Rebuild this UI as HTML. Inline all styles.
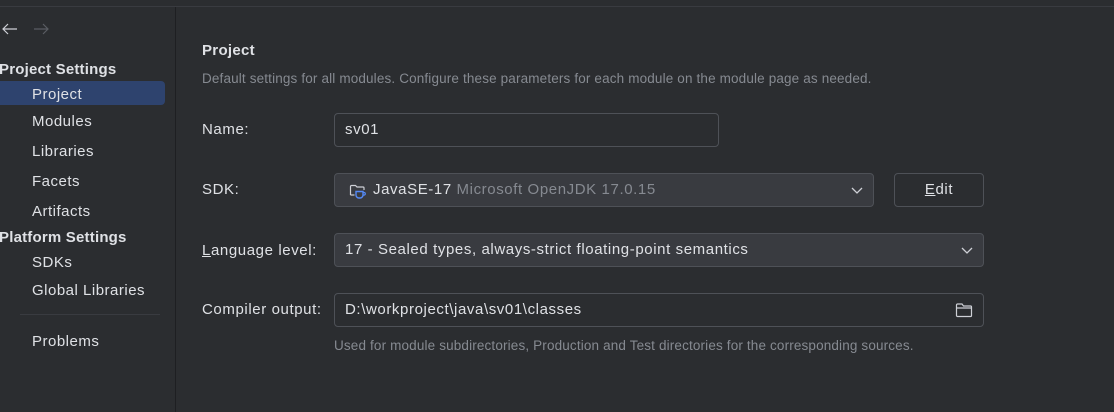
<!DOCTYPE html><html><head><meta charset="utf-8"><style>
body{margin:0;width:1114px;height:412px;background:#2b2d30;font-family:"Liberation Sans","DejaVu Sans",sans-serif;color:#dfe1e5;font-size:15px;letter-spacing:0.6px;position:relative;overflow:hidden}
.abs{position:absolute}
.top{left:0;top:0;width:1114px;height:6px;background:#2b2d30;border-bottom:1px solid #393b40}
.vline{left:175px;top:7px;width:1px;height:405px;background:#1e1f22}
.side{font-size:15px;letter-spacing:0.5px}
.hdr{font-weight:bold;left:-1px;letter-spacing:0.2px}
.item{left:32px}
.sel{left:0;top:81px;width:165px;height:24px;background:#2e436e;border-radius:0 4px 4px 0}
.field{border:1px solid #4e5157;border-radius:4px;box-sizing:border-box;height:34px;padding:0 10px;line-height:32px}
.combo{background:#393b40;border-color:#4e5157}
.lbl{left:202px}
.chev{position:absolute;right:10px;top:11px}
.desc{font-size:13.5px;color:#868a91;letter-spacing:0.15px}
</style></head><body>
<div class="abs top"></div>
<div class="abs vline"></div>
<svg class="abs" style="left:1px;top:22px" width="18" height="14"><path d="M16 7H2M7 2L2 7l5 5" fill="none" stroke="#ced0d6" stroke-width="1.2"/></svg>
<svg class="abs" style="left:33px;top:22px" width="18" height="14"><path d="M1 7h14M10 2l5 5-5 5" fill="none" stroke="#5a5d63" stroke-width="1.2"/></svg>
<div class="abs sel"></div>
<div class="abs side hdr" style="top:61px">Project Settings</div>
<div class="abs side item" style="top:86px">Project</div>
<div class="abs side item" style="top:113px">Modules</div>
<div class="abs side item" style="top:143px">Libraries</div>
<div class="abs side item" style="top:173px">Facets</div>
<div class="abs side item" style="top:203px">Artifacts</div>
<div class="abs side hdr" style="top:229px">Platform Settings</div>
<div class="abs side item" style="top:254px">SDKs</div>
<div class="abs side item" style="top:282px">Global Libraries</div>
<div class="abs" style="left:20px;top:314px;width:140px;height:1px;background:#393b40"></div>
<div class="abs side item" style="top:333px">Problems</div>

<div class="abs" style="left:202px;top:42px;font-weight:bold;font-size:15px;letter-spacing:0.3px">Project</div>
<div class="abs desc" style="left:202px;top:71px">Default settings for all modules. Configure these parameters for each module on the module page as needed.</div>

<div class="abs lbl" style="top:121px">Name:</div>
<div class="abs field" style="left:334px;top:113px;width:385px">sv01</div>

<div class="abs lbl" style="top:181px">SDK:</div>
<div class="abs field combo" style="left:334px;top:173px;width:540px;padding-left:38px">JavaSE-17 <span style="color:#868a91">Microsoft OpenJDK 17.0.15</span>
<svg class="abs" style="left:14px;top:9px" width="18" height="16" viewBox="0 0 18 16"><path d="M1.5 12V3.5a1 1 0 0 1 1-1h4l1.5 1.5h6a1 1 0 0 1 1 1V7" fill="none" stroke="#ced0d6" stroke-width="1.2"/><path d="M1.5 12h4" stroke="#ced0d6" stroke-width="1.2"/><path d="M7 8.5h7v3.5a3 3 0 0 1-3 3h-1a3 3 0 0 1-3-3z" fill="none" stroke="#548af7" stroke-width="1.4"/><path d="M14 9.5h1a1.3 1.3 0 0 1 0 2.6h-1" fill="none" stroke="#548af7" stroke-width="1.2"/></svg>
<svg class="chev" width="12" height="10"><path d="M1 3l5 5 5-5" fill="none" stroke="#ced0d6" stroke-width="1.3"/></svg></div>
<div class="abs field" style="left:894px;top:173px;width:90px;text-align:center"><u>E</u>dit</div>

<div class="abs lbl" style="top:242px"><u>L</u>anguage level:</div>
<div class="abs field combo" style="left:334px;top:233px;width:650px">17 - Sealed types, always-strict floating-point semantics
<svg class="chev" width="12" height="10"><path d="M1 3l5 5 5-5" fill="none" stroke="#ced0d6" stroke-width="1.3"/></svg></div>

<div class="abs lbl" style="top:301px">Compiler output:</div>
<div class="abs field" style="left:334px;top:293px;width:650px">D:\workproject\java\sv01\classes
<svg class="abs" style="right:10px;top:8px" width="18" height="16" viewBox="0 0 18 16"><path d="M1.5 13.5V3a1 1 0 0 1 1-1h4.5l1.5 2h7a1 1 0 0 1 1 1v8.5a1 1 0 0 1-1 1h-13a1 1 0 0 1-1-1zM1.5 6h15" fill="none" stroke="#ced0d6" stroke-width="1.2"/></svg></div>
<div class="abs desc" style="left:334px;top:338px">Used for module subdirectories, Production and Test directories for the corresponding sources.</div>
</body></html>
